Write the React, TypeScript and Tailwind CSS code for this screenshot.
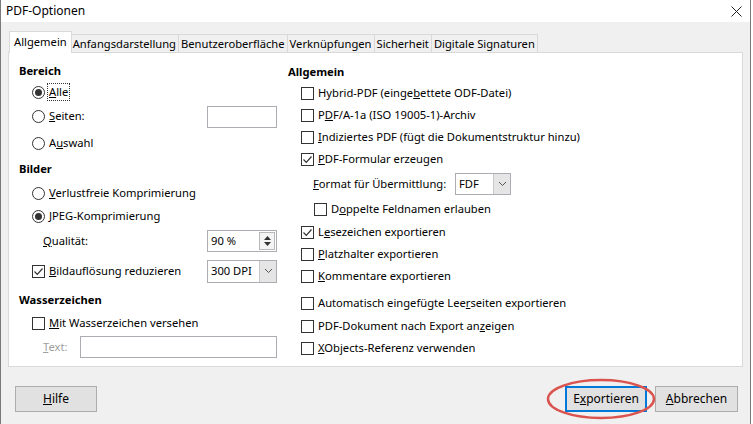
import React from 'react';

const font = { fontFamily: '"Noto Sans", "Open Sans", sans-serif' };

function Radio({ checked }: { checked?: boolean }) {
  return (
    <span className="w-[13px] h-[13px] rounded-full border border-[#333] bg-white flex items-center justify-center shrink-0">
      {checked && <span className="w-[7px] h-[7px] rounded-full bg-[#333]" />}
    </span>
  );
}

function Check({ checked }: { checked?: boolean }) {
  return (
    <span className="w-[13px] h-[13px] border border-[#333] bg-white flex items-center justify-center shrink-0">
      {checked && (
        <svg width="11" height="11" viewBox="0 0 11 11">
          <path d="M1.5 5.5 L4.3 8.3 L9.5 2.5" fill="none" stroke="#333" strokeWidth="1.2" />
        </svg>
      )}
    </span>
  );
}

function Chevron() {
  return (
    <svg width="9" height="6" viewBox="0 0 9 6">
      <path d="M1 1 L4.5 4.5 L8 1" fill="none" stroke="#555" strokeWidth="1" />
    </svg>
  );
}

function Row({ h, children, className = '' }: { h: string; children: React.ReactNode; className?: string }) {
  return <div className={`flex items-center shrink-0 ${h} ${className}`}>{children}</div>;
}

function Tab({ label, active }: { label: string; active?: boolean }) {
  if (active) {
    return (
      <div className="h-[22px] px-[4px] bg-white border border-b-0 border-[#d9d9d9] flex items-center -mr-px z-10 relative">
        {label}
      </div>
    );
  }
  return (
    <div className="h-[19px] px-[2px] bg-[#f0f0f0] border border-b-0 border-[#d9d9d9] -ml-px flex items-center">
      {label}
    </div>
  );
}

export default function App() {
  return (
    <div className="w-[753px] h-[424px] bg-white overflow-hidden text-[11.2px] text-black" style={font}>
      <div className="w-[751px] h-[424px] bg-[#f0f0f0] border-l border-r border-[#7a7a7a] flex flex-col relative">
        {/* title bar */}
        <div className="h-[22px] bg-white flex items-center justify-between pl-[5px] pr-[8px] shrink-0">
          <span className="text-[12px]">PDF-Optionen</span>
          <svg width="11" height="11" viewBox="0 0 11 11">
            <path d="M0.5 0.5 L10.5 10.5 M10.5 0.5 L0.5 10.5" stroke="#222" strokeWidth="1" />
          </svg>
        </div>

        {/* tabs */}
        <div className="flex items-end pl-[8px] mt-[9px] h-[22px] shrink-0">
          <Tab label="Allgemein" active />
          <Tab label="Anfangsdarstellung" />
          <Tab label="Benutzeroberfläche" />
          <Tab label="Verknüpfungen" />
          <Tab label="Sicherheit" />
          <Tab label="Digitale Signaturen" />
        </div>

        {/* panel */}
        <div className="ml-[7px] w-[735px] h-[315px] bg-white border border-[#d9d9d9] -mt-px flex pt-[9px] shrink-0">
          {/* left column */}
          <div className="w-[268px] pl-[10px] flex flex-col">
            <Row h="h-[19px]"><span className="font-bold">Bereich</span></Row>
            <Row h="h-[22px]" className="pl-[13px] gap-[3px]">
              <Radio checked />
              <span className="outline outline-1 outline-dotted outline-[#333] px-px"><u>A</u>lle</span>
            </Row>
            <Row h="h-[27px]" className="pl-[13px] gap-[4px]">
              <Radio />
              <span><u>S</u>eiten:</span>
              <span className="ml-auto w-[70px] h-[22px] border border-[#abadb3] bg-white shrink-0" />
            </Row>
            <Row h="h-[26px]" className="pl-[13px] gap-[4px]">
              <Radio />
              <span>A<u>u</u>swahl</span>
            </Row>
            <Row h="h-[26px]"><span className="font-bold">Bilder</span></Row>
            <Row h="h-[22px]" className="pl-[13px] gap-[4px]">
              <Radio />
              <span><u>V</u>erlustfreie Komprimierung</span>
            </Row>
            <Row h="h-[24px]" className="pl-[13px] gap-[4px]">
              <Radio checked />
              <span><u>J</u>PEG-Komprimierung</span>
            </Row>
            <Row h="h-[26px]" className="pl-[24px]">
              <span><u>Q</u>ualität:</span>
              <span className="ml-auto w-[70px] h-[22px] border border-[#abadb3] bg-white flex items-center pl-[3px] justify-between shrink-0">
                <span>90 %</span>
                <span className="w-[16px] h-[18px] mr-[1px] border border-[#b8b8b8] bg-[#f4f4f4] flex flex-col items-center justify-center gap-[2px]">
                  <svg width="7" height="4" viewBox="0 0 7 4"><path d="M0 4 L3.5 0 L7 4 Z" fill="#333" /></svg>
                  <svg width="7" height="4" viewBox="0 0 7 4"><path d="M0 0 L3.5 4 L7 0 Z" fill="#333" /></svg>
                </span>
              </span>
            </Row>
            <Row h="h-[34px]" className="pl-[13px] gap-[4px]">
              <Check checked />
              <span><u>B</u>ildauflösung reduzieren</span>
              <span className="ml-auto w-[70px] h-[23px] border border-[#abadb3] bg-white flex items-center pl-[3px] justify-between shrink-0">
                <span>300 DPI</span>
                <span className="w-[17px] h-full border-l border-[#c8c8c8] bg-[#e5e5e5] flex items-center justify-center"><Chevron /></span>
              </span>
            </Row>
            <Row h="h-[24px]"><span className="font-bold">Wasserzeichen</span></Row>
            <Row h="h-[23px]" className="pl-[13px] gap-[4px]">
              <Check />
              <span><u>M</u>it Wasserzeichen versehen</span>
            </Row>
            <Row h="h-[24px]" className="pl-[24px]">
              <span className="text-[#a0a0a0]"><u>T</u>ext:</span>
              <span className="ml-auto w-[197px] h-[22px] border border-[#abadb3] bg-white shrink-0" />
            </Row>
          </div>

          {/* right column */}
          <div className="flex-1 pl-[11px] flex flex-col">
            <Row h="h-[20px]"><span className="font-bold">Allgemein</span></Row>
            <Row h="h-[22px]" className="pl-[13px] gap-[4px]">
              <Check /><span>Hybrid-PDF (einge<u>b</u>ettete ODF-Datei)</span>
            </Row>
            <Row h="h-[22px]" className="pl-[13px] gap-[4px]">
              <Check /><span>P<u>D</u>F/A-1a (ISO 19005-1)-Archiv</span>
            </Row>
            <Row h="h-[22px]" className="pl-[13px] gap-[4px]">
              <Check /><span><u>I</u>ndiziertes PDF (fügt die Dokumentstruktur hinzu)</span>
            </Row>
            <Row h="h-[23px]" className="pl-[13px] gap-[4px]">
              <Check checked /><span><u>P</u>DF-Formular erzeugen</span>
            </Row>
            <Row h="h-[26px]" className="pl-[25px]">
              <span className="w-[142px]"><u>F</u>ormat für Übermittlung:</span>
              <span className="w-[56px] h-[22px] border border-[#abadb3] bg-white flex items-center pl-[3px] justify-between">
                <span>FDF</span>
                <span className="w-[17px] h-full border-l border-[#c8c8c8] bg-[#e5e5e5] flex items-center justify-center"><Chevron /></span>
              </span>
            </Row>
            <Row h="h-[24px]" className="pl-[26px] gap-[4px]">
              <Check /><span>D<u>o</u>ppelte Feldnamen erlauben</span>
            </Row>
            <Row h="h-[22px]" className="pl-[13px] gap-[4px]">
              <Check checked /><span>L<u>e</u>sezeichen exportieren</span>
            </Row>
            <Row h="h-[22px]" className="pl-[13px] gap-[4px]">
              <Check /><span><u>P</u>latzhalter exportieren</span>
            </Row>
            <Row h="h-[22px]" className="pl-[13px] gap-[4px]">
              <Check /><span><u>K</u>ommentare exportieren</span>
            </Row>
            <Row h="h-[23px]" className="pl-[13px] gap-[4px] mt-[5px]">
              <Check /><span>Automatisch eingefügte Lee<u>r</u>seiten exportieren</span>
            </Row>
            <Row h="h-[22px]" className="pl-[13px] gap-[4px]">
              <Check /><span>PDF-Dokument nach Export an<u>z</u>eigen</span>
            </Row>
            <Row h="h-[23px]" className="pl-[13px] gap-[4px]">
              <Check /><span><u>X</u>Objects-Referenz verwenden</span>
            </Row>
          </div>
        </div>

        {/* buttons */}
        <div className="flex items-center mt-[19px] pl-[14px] pr-[12px] h-[26px] shrink-0">
          <button className="w-[82px] h-[26px] bg-[#e1e1e1] border border-[#adadad] text-[12px]"><u>H</u>ilfe</button>
          <div className="flex-1" />
          <div className="relative">
            <button className="w-[82px] h-[26px] bg-[#e1e1e1] border-2 border-[#0078d7] text-[12px]">E<u>x</u>portieren</button>
            <svg className="absolute -left-[20px] -top-[9px] pointer-events-none" width="112" height="44" viewBox="0 0 112 44">
              <ellipse cx="56" cy="22" rx="53" ry="19" fill="none" stroke="#d9534f" strokeWidth="2.5" />
            </svg>
          </div>
          <button className="ml-[8px] w-[83px] h-[26px] bg-[#e1e1e1] border border-[#adadad] text-[12px]"><u>A</u>bbrechen</button>
        </div>
      </div>
    </div>
  );
}
